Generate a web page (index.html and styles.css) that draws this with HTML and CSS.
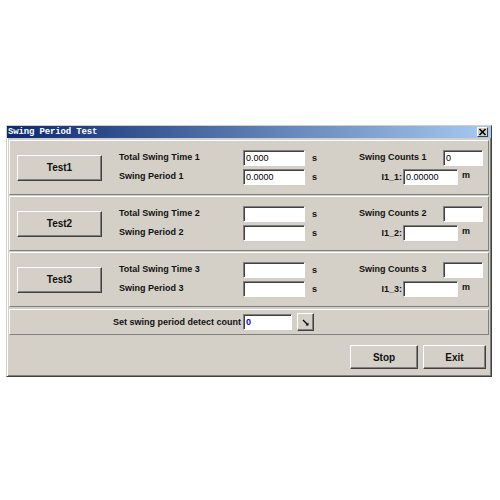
FILE: index.html
```html
<!DOCTYPE html>
<html>
<head>
<meta charset="utf-8">
<link rel="stylesheet" href="styles.css">
</head>
<body>
<div class="window">
  <div class="titlebar">
    <span class="title">Swing Period Test</span>
    <span class="close"><svg width="9" height="8" viewBox="0 0 9 8"><path d="M1.5 1 L7.5 7 M7.5 1 L1.5 7" stroke="#000" stroke-width="1.6"/></svg></span>
  </div>
  <div class="content">
    <div class="group">
      <button class="btn test">Test1</button>
      <div class="rows">
        <div class="row">
          <span class="lbl">Total Swing Time 1</span>
          <input class="field main" value="0.000">
          <span class="unit">s</span>
          <span class="rlbl">Swing Counts 1</span>
          <input class="field count" value="0">
        </div>
        <div class="row">
          <span class="lbl">Swing Period 1</span>
          <input class="field main" value="0.0000">
          <span class="unit">s</span>
          <span class="rlbl2">I1_1:</span>
          <input class="field len" value="0.00000">
          <span class="munit">m</span>
        </div>
      </div>
    </div>
    <div class="group">
      <button class="btn test">Test2</button>
      <div class="rows">
        <div class="row">
          <span class="lbl">Total Swing Time 2</span>
          <input class="field main" value="">
          <span class="unit">s</span>
          <span class="rlbl">Swing Counts 2</span>
          <input class="field count" value="">
        </div>
        <div class="row">
          <span class="lbl">Swing Period 2</span>
          <input class="field main" value="">
          <span class="unit">s</span>
          <span class="rlbl2">I1_2:</span>
          <input class="field len" value="">
          <span class="munit">m</span>
        </div>
      </div>
    </div>
    <div class="group">
      <button class="btn test">Test3</button>
      <div class="rows">
        <div class="row">
          <span class="lbl">Total Swing Time 3</span>
          <input class="field main" value="">
          <span class="unit">s</span>
          <span class="rlbl">Swing Counts 3</span>
          <input class="field count" value="">
        </div>
        <div class="row">
          <span class="lbl">Swing Period 3</span>
          <input class="field main" value="">
          <span class="unit">s</span>
          <span class="rlbl2">I1_3:</span>
          <input class="field len" value="">
          <span class="munit">m</span>
        </div>
      </div>
    </div>
    <div class="group detect">
      <span class="detect-lbl">Set swing period detect count</span>
      <input class="field dcount" value="0">
      <button class="btn small"><svg width="9" height="9" viewBox="0 0 9 9"><path d="M2 2 L6.5 6.5" stroke="#000" stroke-width="1.2"/><path d="M7.5 7.5 L7.5 4.5 L4.5 7.5 Z" fill="#000"/></svg></button>
    </div>
    <div class="footer">
      <button class="btn action stop">Stop</button>
      <button class="btn action exit">Exit</button>
    </div>
  </div>
</div>
</body>
</html>
```

FILE: styles.css
```css
body {
  margin: 0;
  background: #fff;
  font-family: "Liberation Sans", Arial, sans-serif;
}

.window {
  margin: 125px 0 0 6px;
  width: 486px;
  height: 252px;
  box-sizing: border-box;
  background: #d4d0c8;
  border: 1px solid;
  border-color: #d4d0c8 #404040 #404040 #d4d0c8;
  box-shadow: inset 1px 1px 0 #fff, inset -1px -1px 0 #808080;
  display: flex;
  flex-direction: column;
}

.titlebar {
  height: 12px;
  flex: none;
  display: flex;
  align-items: center;
  justify-content: space-between;
  background: linear-gradient(to right, #0c2a70, #a6caf0);
  padding-left: 1px;
}

.title {
  color: #fff;
  font: bold 9px "Liberation Mono", "Courier New", monospace;
  letter-spacing: -0.15px;
}

.close {
  width: 11px;
  height: 10px;
  margin-right: 3px;
  box-sizing: border-box;
  background: #d4d0c8;
  border: 1px solid;
  border-color: #fff #404040 #404040 #fff;
  display: flex;
  align-items: center;
  justify-content: center;
}

.content {
  padding: 2px 2px 0;
  display: flex;
  flex-direction: column;
  gap: 1px;
}

.group {
  height: 55px;
  box-sizing: border-box;
  border: 1px solid;
  border-color: #fff #808080 #808080 #fff;
  display: flex;
  align-items: center;
  padding-left: 7px;
}

.btn {
  margin: 0;
  padding: 0;
  box-sizing: border-box;
  background: #d4d0c8;
  border: 1px solid;
  border-color: #fff #404040 #404040 #fff;
  box-shadow: inset -1px -1px 0 #808080;
  font: bold 10px "Liberation Sans", Arial, sans-serif;
  color: #111;
}

.test {
  width: 85px;
  height: 26px;
}

.rows {
  margin-left: 17px;
  display: flex;
  flex-direction: column;
  gap: 3px;
}

.row {
  display: flex;
  align-items: center;
  height: 16px;
  font-size: 9px;
  font-weight: bold;
  color: #111;
}

.lbl {
  width: 124px;
  margin-top: -2px;
}

.field {
  margin: 0;
  height: 16px;
  box-sizing: border-box;
  background: #fff;
  border: 1px solid;
  border-color: #808080 #fff #fff #808080;
  box-shadow: inset 1px 1px 0 #404040;
  padding: 0 0 0 2px;
  font: 9px "Liberation Sans", Arial, sans-serif;
  color: #000;
  outline: none;
}

.main {
  width: 62px;
}

.count {
  width: 40px;
}

.len {
  width: 55px;
}

.unit {
  width: 54px;
  box-sizing: border-box;
  padding-left: 7px;
}

.rlbl {
  width: 84px;
  margin-top: -2px;
}

.rlbl2 {
  width: 44px;
  box-sizing: border-box;
  text-align: right;
  padding-right: 1px;
}

.munit {
  padding-left: 4px;
  margin-top: -4px;
}

.detect {
  height: 26px;
  margin-top: 1px;
  padding-left: 0;
  font-size: 9px;
  font-weight: bold;
  color: #111;
}

.detect-lbl {
  width: 233px;
  box-sizing: border-box;
  text-align: right;
  padding-right: 2px;
}

.dcount {
  width: 49px;
  color: #1010b0;
  font-weight: bold;
}

.small {
  width: 17px;
  height: 18px;
  margin-left: 5px;
  display: flex;
  align-items: center;
  justify-content: center;
}

.footer {
  display: flex;
  justify-content: flex-end;
  gap: 5px;
  padding: 9px 3px 0 0;
}

.action {
  height: 24px;
}

.stop {
  width: 68px;
}

.exit {
  width: 63px;
}
```
